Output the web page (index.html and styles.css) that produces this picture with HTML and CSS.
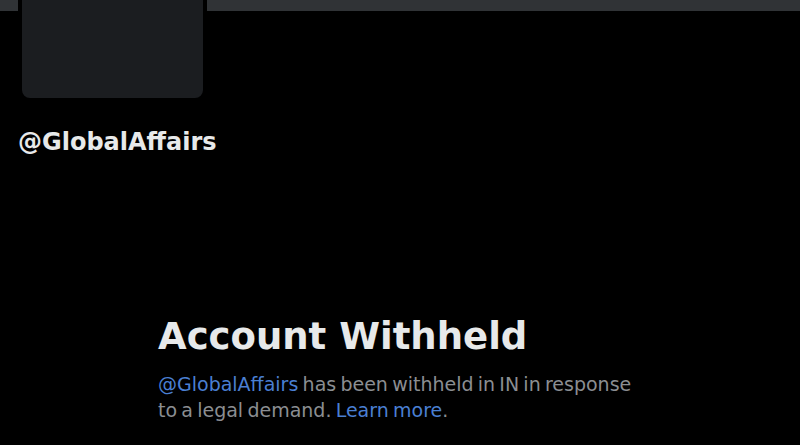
FILE: index.html
```html
<!DOCTYPE html>
<html>

<head>
    <meta charset="UTF-8">
    <title>@GlobalAffairs</title>
    <link rel="stylesheet" href="styles.css">
</head>

<body>
    <div class="banner"></div>
    <div class="profile">
        <div class="avatar"></div>
        <div class="handle">@GlobalAffairs</div>
    </div>

    <div class="withheld">
        <h1>Account Withheld</h1>
        <p><a href="#">@GlobalAffairs</a> has been withheld in IN in response to a legal demand. <a href="#">Learn more</a>.</p>
    </div>
</body>

</html>
```

FILE: styles.css
```css
html,
body {
    margin: 0;
    height: 100%;
    background: #000;
    overflow: hidden;
}

body {
    font-family: "DejaVu Sans", sans-serif;
    color: #e7e9ea;
}

.banner {
    height: 11px;
    background: #303336;
}

.profile {
    padding-left: 18px;
}

.avatar {
    width: 181px;
    height: 181px;
    margin-top: -98px;
    border: 4px solid #000;
    border-radius: 12px;
    background: #1b1d20;
}

.handle {
    margin-top: 26px;
    font-size: 24px;
    font-weight: bold;
}

.withheld {
    width: 484px;
    margin: 159px 0 0 158px;
}

.withheld h1 {
    margin: 0 0 12px;
    font-size: 37px;
    line-height: 44px;
    font-weight: bold;
}

.withheld p {
    margin: 0;
    font-size: 19px;
    line-height: 26px;
    word-spacing: -1.8px;
    color: #8b8e92;
}

.withheld a {
    color: #4a7fd2;
    text-decoration: none;
}
```
